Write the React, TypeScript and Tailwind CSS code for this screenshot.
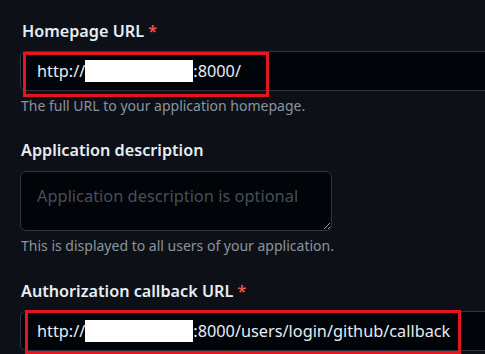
const Field = ({ label, required }: { label: string; required?: boolean }) => (
  <div className="text-[16.2px] leading-6 font-semibold text-[#e6edf3]">
    {label}
    {required && <span className="text-[#f85149]"> *</span>}
  </div>
);

const Masked = () => <span className="inline-block w-[108px] h-[22px] bg-white align-[-5px]" />;

export default function App() {
  return (
    <div className="relative w-[485px] h-[354px] overflow-hidden bg-[#0d1117] font-['Noto_Sans',sans-serif]">
      <div className="flex flex-col pl-5 pt-[19px]">
        <div className="pl-[2px]">
          <Field label="Homepage URL" required />
        </div>
        <div className="mt-[8px] w-[520px] h-10 rounded-md border border-[#30363d] bg-[#010409] flex items-center pl-4 text-[16.3px] text-[#e6edf3]">
          http://
          <Masked />
          :8000/
        </div>
        <p className="mt-[5px] pl-[1px] text-[14px] leading-5 text-[#8b949e]">The full URL to your application homepage.</p>

        <div className="mt-[22px] pl-[1px]">
          <Field label="Application description" />
        </div>
        <textarea
          className="mt-[9px] w-[312px] h-[60px] rounded-md border border-[#30363d] bg-[#010409] px-4 py-[12px] text-[16.4px] leading-6 text-[#e6edf3] placeholder:text-[#484f58] outline-none"
          placeholder="Application description is optional"
        />
        <p className="mt-[5px] pl-[1px] text-[14px] leading-5 text-[#8b949e]">This is displayed to all users of your application.</p>

        <div className="mt-[23px] pl-[1px]">
          <Field label="Authorization callback URL" required />
        </div>
        <div className="mt-[8px] w-[520px] h-10 rounded-md border border-[#30363d] bg-[#010409] flex items-center pl-4 text-[16.3px] text-[#e6edf3]">
          http://
          <Masked />
          :8000/users/login/github/callback
        </div>
      </div>

      <div className="absolute left-[23px] top-[52px] w-[246px] h-[45px] border-[3px] border-[#e5141e]" />
      <div className="absolute left-[25px] top-[310px] w-[436px] h-[44px] border-[3px] border-[#e5141e]" />
    </div>
  );
}
